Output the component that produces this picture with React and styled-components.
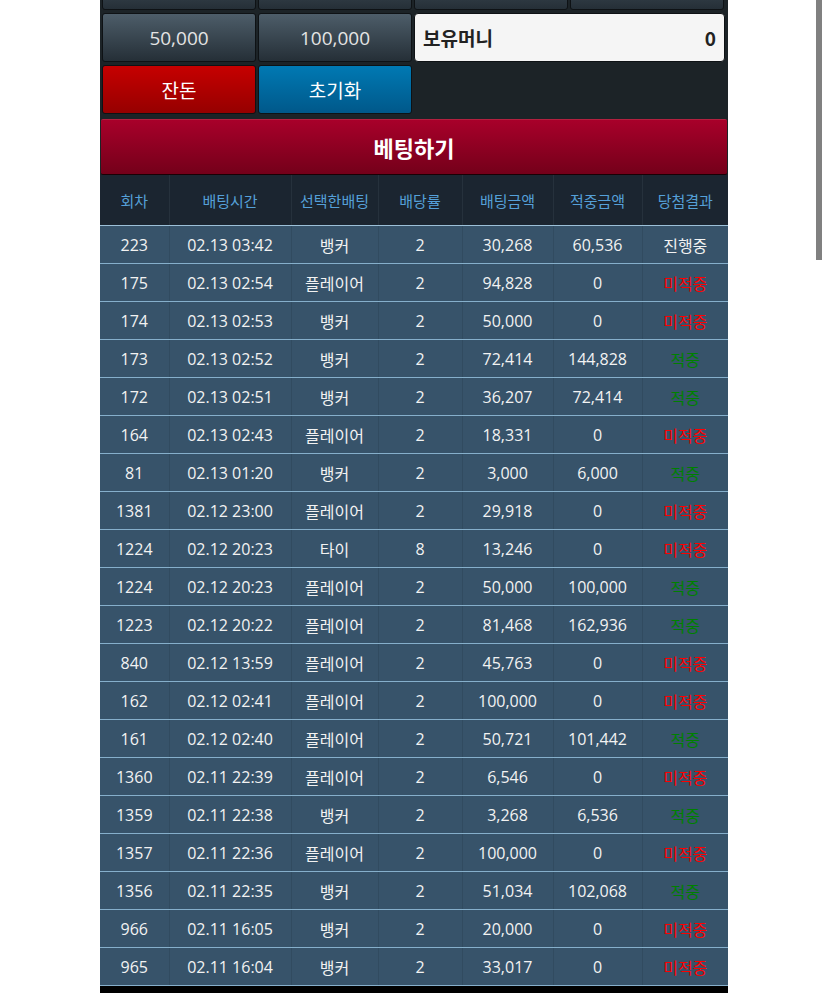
import React from "react";
import styled, { createGlobalStyle } from "styled-components";

const Global = createGlobalStyle`
  html, body { margin: 0; padding: 0; background: #fff; }
  body { font-family: "Open Sans", "Noto Sans CJK KR", sans-serif; overflow: hidden; }
`;

const Page = styled.div`
  width: 628px;
  margin: 0 0 0 100px;
  background: #1c2327;
  border-bottom: 7px solid #000;
`;

const ButtonGrid = styled.div`
  display: grid;
  grid-template-columns: repeat(4, 154px);
  grid-auto-rows: 49px;
  column-gap: 2px;
  row-gap: 3px;
  padding: 0 2px 0 2px;
  margin-top: -39px;
`;

const tone = {
  dark: ["#4d5d69", "#252f37", "#e4e4e4"],
  red: ["#c60000", "#960000", "#ffffff"],
  blue: ["#0079b3", "#00588a", "#ffffff"],
};

const Btn = styled.div`
  display: flex;
  align-items: center;
  justify-content: center;
  border: 1px solid #0e1215;
  border-radius: 3px;
  background: linear-gradient(${(p) => tone[p.$tone][0]}, ${(p) => tone[p.$tone][1]});
  color: ${(p) => tone[p.$tone][2]};
  font-size: 19px;
  box-sizing: border-box;
`;

const Money = styled.div`
  grid-column: span 2;
  margin-right: -1px;
  display: flex;
  align-items: center;
  justify-content: space-between;
  padding: 0 8px 0 8px;
  background: #f5f5f5;
  border: 1px solid #0e1215;
  border-radius: 4px;
  color: #222;
  font-size: 19px;
  font-weight: 600;
  font-family: "Noto Sans CJK KR", sans-serif;
`;

const BetBar = styled.div`
  margin: 5px 1px 0 1px;
  height: 56px;
  box-sizing: border-box;
  display: flex;
  align-items: center;
  justify-content: center;
  background: linear-gradient(#a8002a, #74001a);
  border-top: 1px solid #b3203f;
  border-bottom: 1px solid #1a0005;
  border-radius: 2px;
  color: #fff;
  font-size: 22px;
  font-weight: 700;
  font-family: "Noto Sans CJK KR", sans-serif;
`;

const Table = styled.table`
  width: 628px;
  border-collapse: collapse;
  table-layout: fixed;
`;

const Th = styled.th`
  height: 50px;
  padding: 0;
  background: #1b2530;
  color: #55a0d8;
  font-size: 15px;
  font-weight: 400;
  font-family: "Noto Sans CJK KR", sans-serif;
  border-left: 1px solid #26313c;
  border-bottom: 1px solid #9cc0d8;
  &:first-child { border-left: none; }
`;

const Td = styled.td`
  height: 37px;
  padding: 0;
  text-align: center;
  background: #37536a;
  color: ${(p) => p.$color || "#f2f2f2"};
  font-size: 16px;
  border-left: 1px solid #314b60;
  border-bottom: 1px solid #86afcb;
  &:first-child { border-left: none; }
`;

const Scroll = styled.div`
  position: fixed;
  top: 0;
  left: 816px;
  width: 6px;
  height: 260px;
  background: #808080;
`;

const widths = [69, 122, 87, 84, 91, 89, 86];
const heads = ["회차", "배팅시간", "선택한배팅", "배당률", "배팅금액", "적중금액", "당첨결과"];

const rows = [
  ["223", "02.13 03:42", "뱅커", "2", "30,268", "60,536", "진행중"],
  ["175", "02.13 02:54", "플레이어", "2", "94,828", "0", "미적중"],
  ["174", "02.13 02:53", "뱅커", "2", "50,000", "0", "미적중"],
  ["173", "02.13 02:52", "뱅커", "2", "72,414", "144,828", "적중"],
  ["172", "02.13 02:51", "뱅커", "2", "36,207", "72,414", "적중"],
  ["164", "02.13 02:43", "플레이어", "2", "18,331", "0", "미적중"],
  ["81", "02.13 01:20", "뱅커", "2", "3,000", "6,000", "적중"],
  ["1381", "02.12 23:00", "플레이어", "2", "29,918", "0", "미적중"],
  ["1224", "02.12 20:23", "타이", "8", "13,246", "0", "미적중"],
  ["1224", "02.12 20:23", "플레이어", "2", "50,000", "100,000", "적중"],
  ["1223", "02.12 20:22", "플레이어", "2", "81,468", "162,936", "적중"],
  ["840", "02.12 13:59", "플레이어", "2", "45,763", "0", "미적중"],
  ["162", "02.12 02:41", "플레이어", "2", "100,000", "0", "미적중"],
  ["161", "02.12 02:40", "플레이어", "2", "50,721", "101,442", "적중"],
  ["1360", "02.11 22:39", "플레이어", "2", "6,546", "0", "미적중"],
  ["1359", "02.11 22:38", "뱅커", "2", "3,268", "6,536", "적중"],
  ["1357", "02.11 22:36", "플레이어", "2", "100,000", "0", "미적중"],
  ["1356", "02.11 22:35", "뱅커", "2", "51,034", "102,068", "적중"],
  ["966", "02.11 16:05", "뱅커", "2", "20,000", "0", "미적중"],
  ["965", "02.11 16:04", "뱅커", "2", "33,017", "0", "미적중"],
];

const resultColor = (r) => (r === "미적중" ? "#ff0000" : r === "적중" ? "#008000" : undefined);

export default function App() {
  return (
    <>
      <Global />
      <Page>
        <ButtonGrid>
          <Btn $tone="dark" />
          <Btn $tone="dark" />
          <Btn $tone="dark" />
          <Btn $tone="dark" />
          <Btn $tone="dark">50,000</Btn>
          <Btn $tone="dark">100,000</Btn>
          <Money>
            <span>보유머니</span>
            <span>0</span>
          </Money>
          <Btn $tone="red">잔돈</Btn>
          <Btn $tone="blue">초기화</Btn>
        </ButtonGrid>
        <BetBar>베팅하기</BetBar>
        <Table>
          <colgroup>
            {widths.map((w, i) => (
              <col key={i} style={{ width: w }} />
            ))}
          </colgroup>
          <thead>
            <tr>
              {heads.map((h) => (
                <Th key={h}>{h}</Th>
              ))}
            </tr>
          </thead>
          <tbody>
            {rows.map((r, i) => (
              <tr key={i}>
                {r.map((c, j) => (
                  <Td key={j} $color={j === 6 ? resultColor(c) : undefined}>
                    {c}
                  </Td>
                ))}
              </tr>
            ))}
          </tbody>
        </Table>
      </Page>
      <Scroll />
    </>
  );
}
